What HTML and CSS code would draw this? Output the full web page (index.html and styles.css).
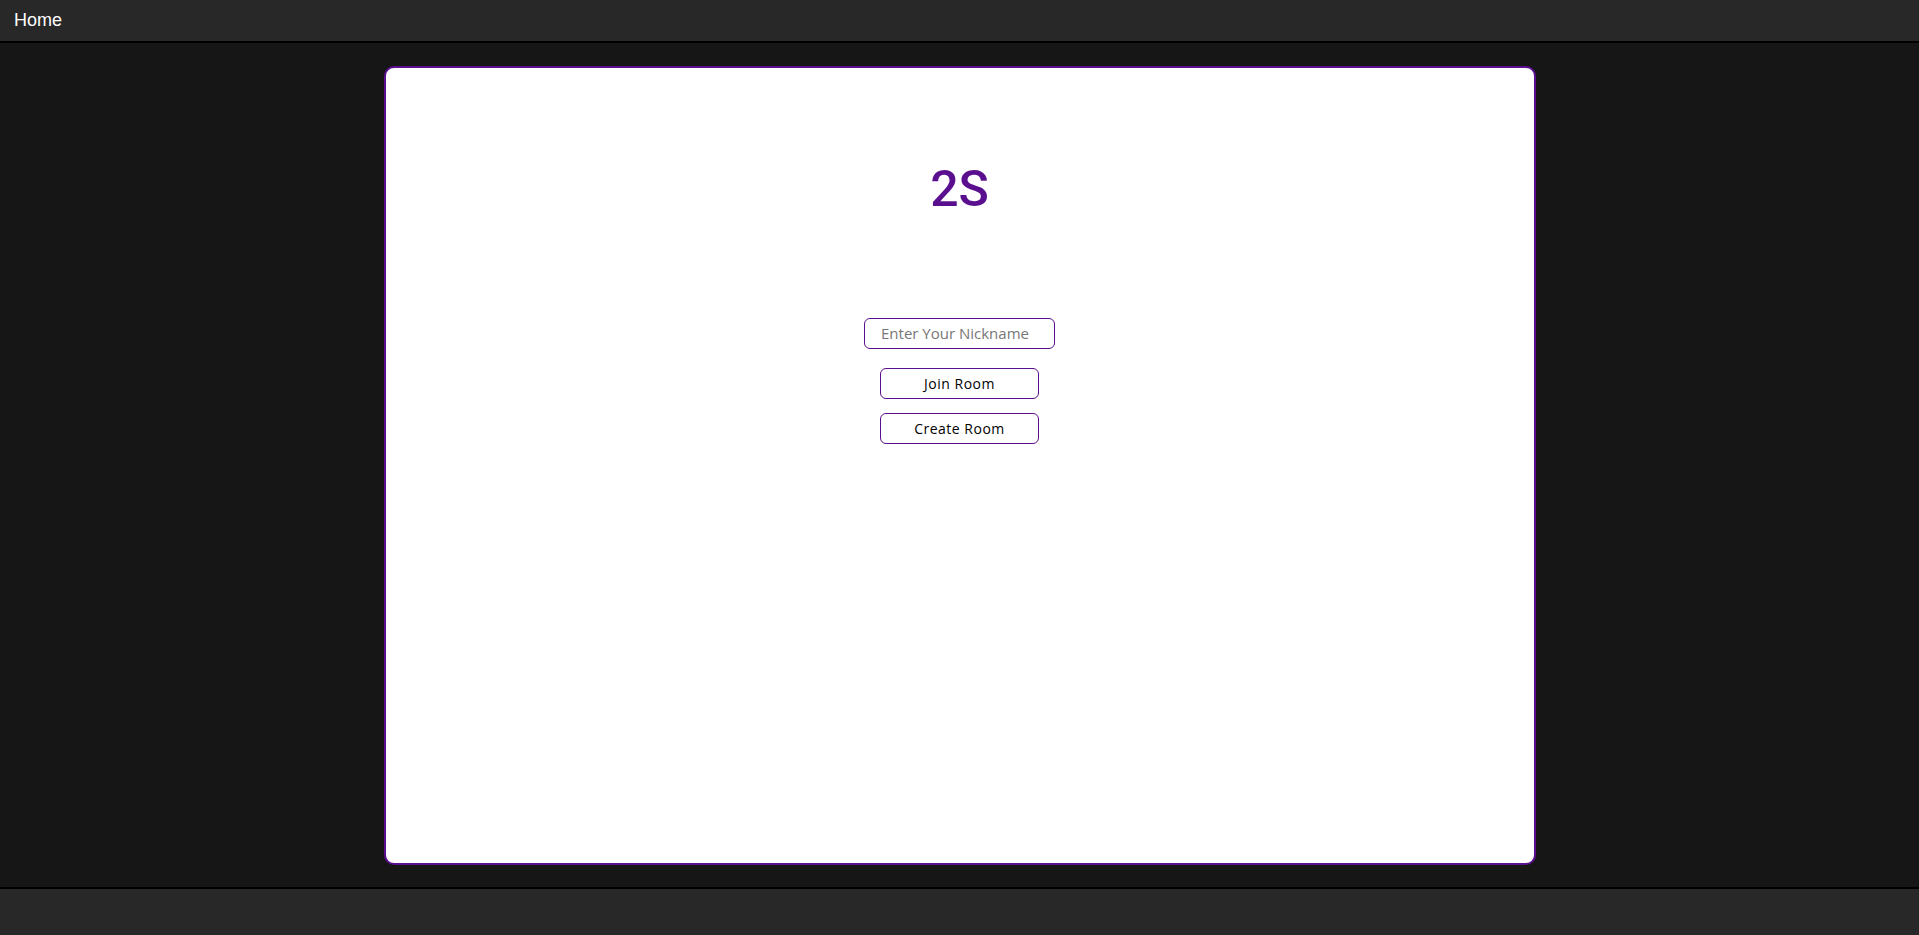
FILE: index.html
```html
<!DOCTYPE html>
<html lang="en">
<head>
<meta charset="utf-8">
<title>2S</title>
<link rel="stylesheet" href="styles.css">
</head>
<body>
<div class="page">
  <header class="topbar">
    <span class="home">Home</span>
  </header>
  <main class="main">
    <section class="card">
      <h1 class="logo">2S</h1>
      <div class="form">
        <input class="nick" type="text" placeholder="Enter Your Nickname">
        <button class="btn" type="button">Join Room</button>
        <button class="btn" type="button">Create Room</button>
      </div>
    </section>
  </main>
  <footer class="footer"></footer>
</div>
</body>
</html>
```
FILE: styles.css
```css
* { box-sizing: border-box; }
html, body { margin: 0; padding: 0; height: 100%; }
body { background: #161616; overflow: hidden; }
.page { height: 935px; display: flex; flex-direction: column; }
.topbar {
  height: 43px;
  flex: 0 0 43px;
  background: #292828;
  border-bottom: 2px solid #000;
  display: flex;
  align-items: center;
  padding-left: 14px;
  padding-bottom: 1px;
}
.home {
  font-family: "Liberation Sans", Arial, sans-serif;
  font-size: 18px;
  color: #ffffff;
}
.main {
  flex: 1 1 auto;
  display: flex;
  align-items: center;
  justify-content: center;
}
.card {
  width: 1152px;
  height: 799px;
  background: #ffffff;
  border: 2px solid #5a0f8e;
  border-radius: 10px;
  display: flex;
  flex-direction: column;
  align-items: center;
  padding-top: 91px;
}
.logo {
  margin: 0;
  font-family: Roboto, "Liberation Sans", sans-serif;
  font-weight: 500;
  font-size: 50px;
  line-height: 60px;
  color: #5a0f8e;
}
.form {
  margin-top: 99px;
  display: flex;
  flex-direction: column;
  align-items: center;
}
.nick {
  width: 191px;
  height: 31px;
  border: 1px solid #5a0f8e;
  border-radius: 6px;
  padding: 0 0 0 16px;
  font-family: "Open Sans", sans-serif;
  font-size: 15px;
  color: #222;
  outline: none;
  background: #fff;
}
.nick::placeholder { color: #777777; }
.btn {
  width: 159px;
  height: 31px;
  margin-top: 14px;
  border: 1px solid #5a0f8e;
  border-radius: 6px;
  background: #ffffff;
  font-family: "Open Sans", sans-serif;
  font-size: 14px;
  letter-spacing: 0.5px;
  color: #000000;
  padding: 0;
}
.nick + .btn { margin-top: 19px; }
.footer {
  flex: 0 0 48px;
  height: 48px;
  background: #292828;
  border-top: 2px solid #000;
}
```
